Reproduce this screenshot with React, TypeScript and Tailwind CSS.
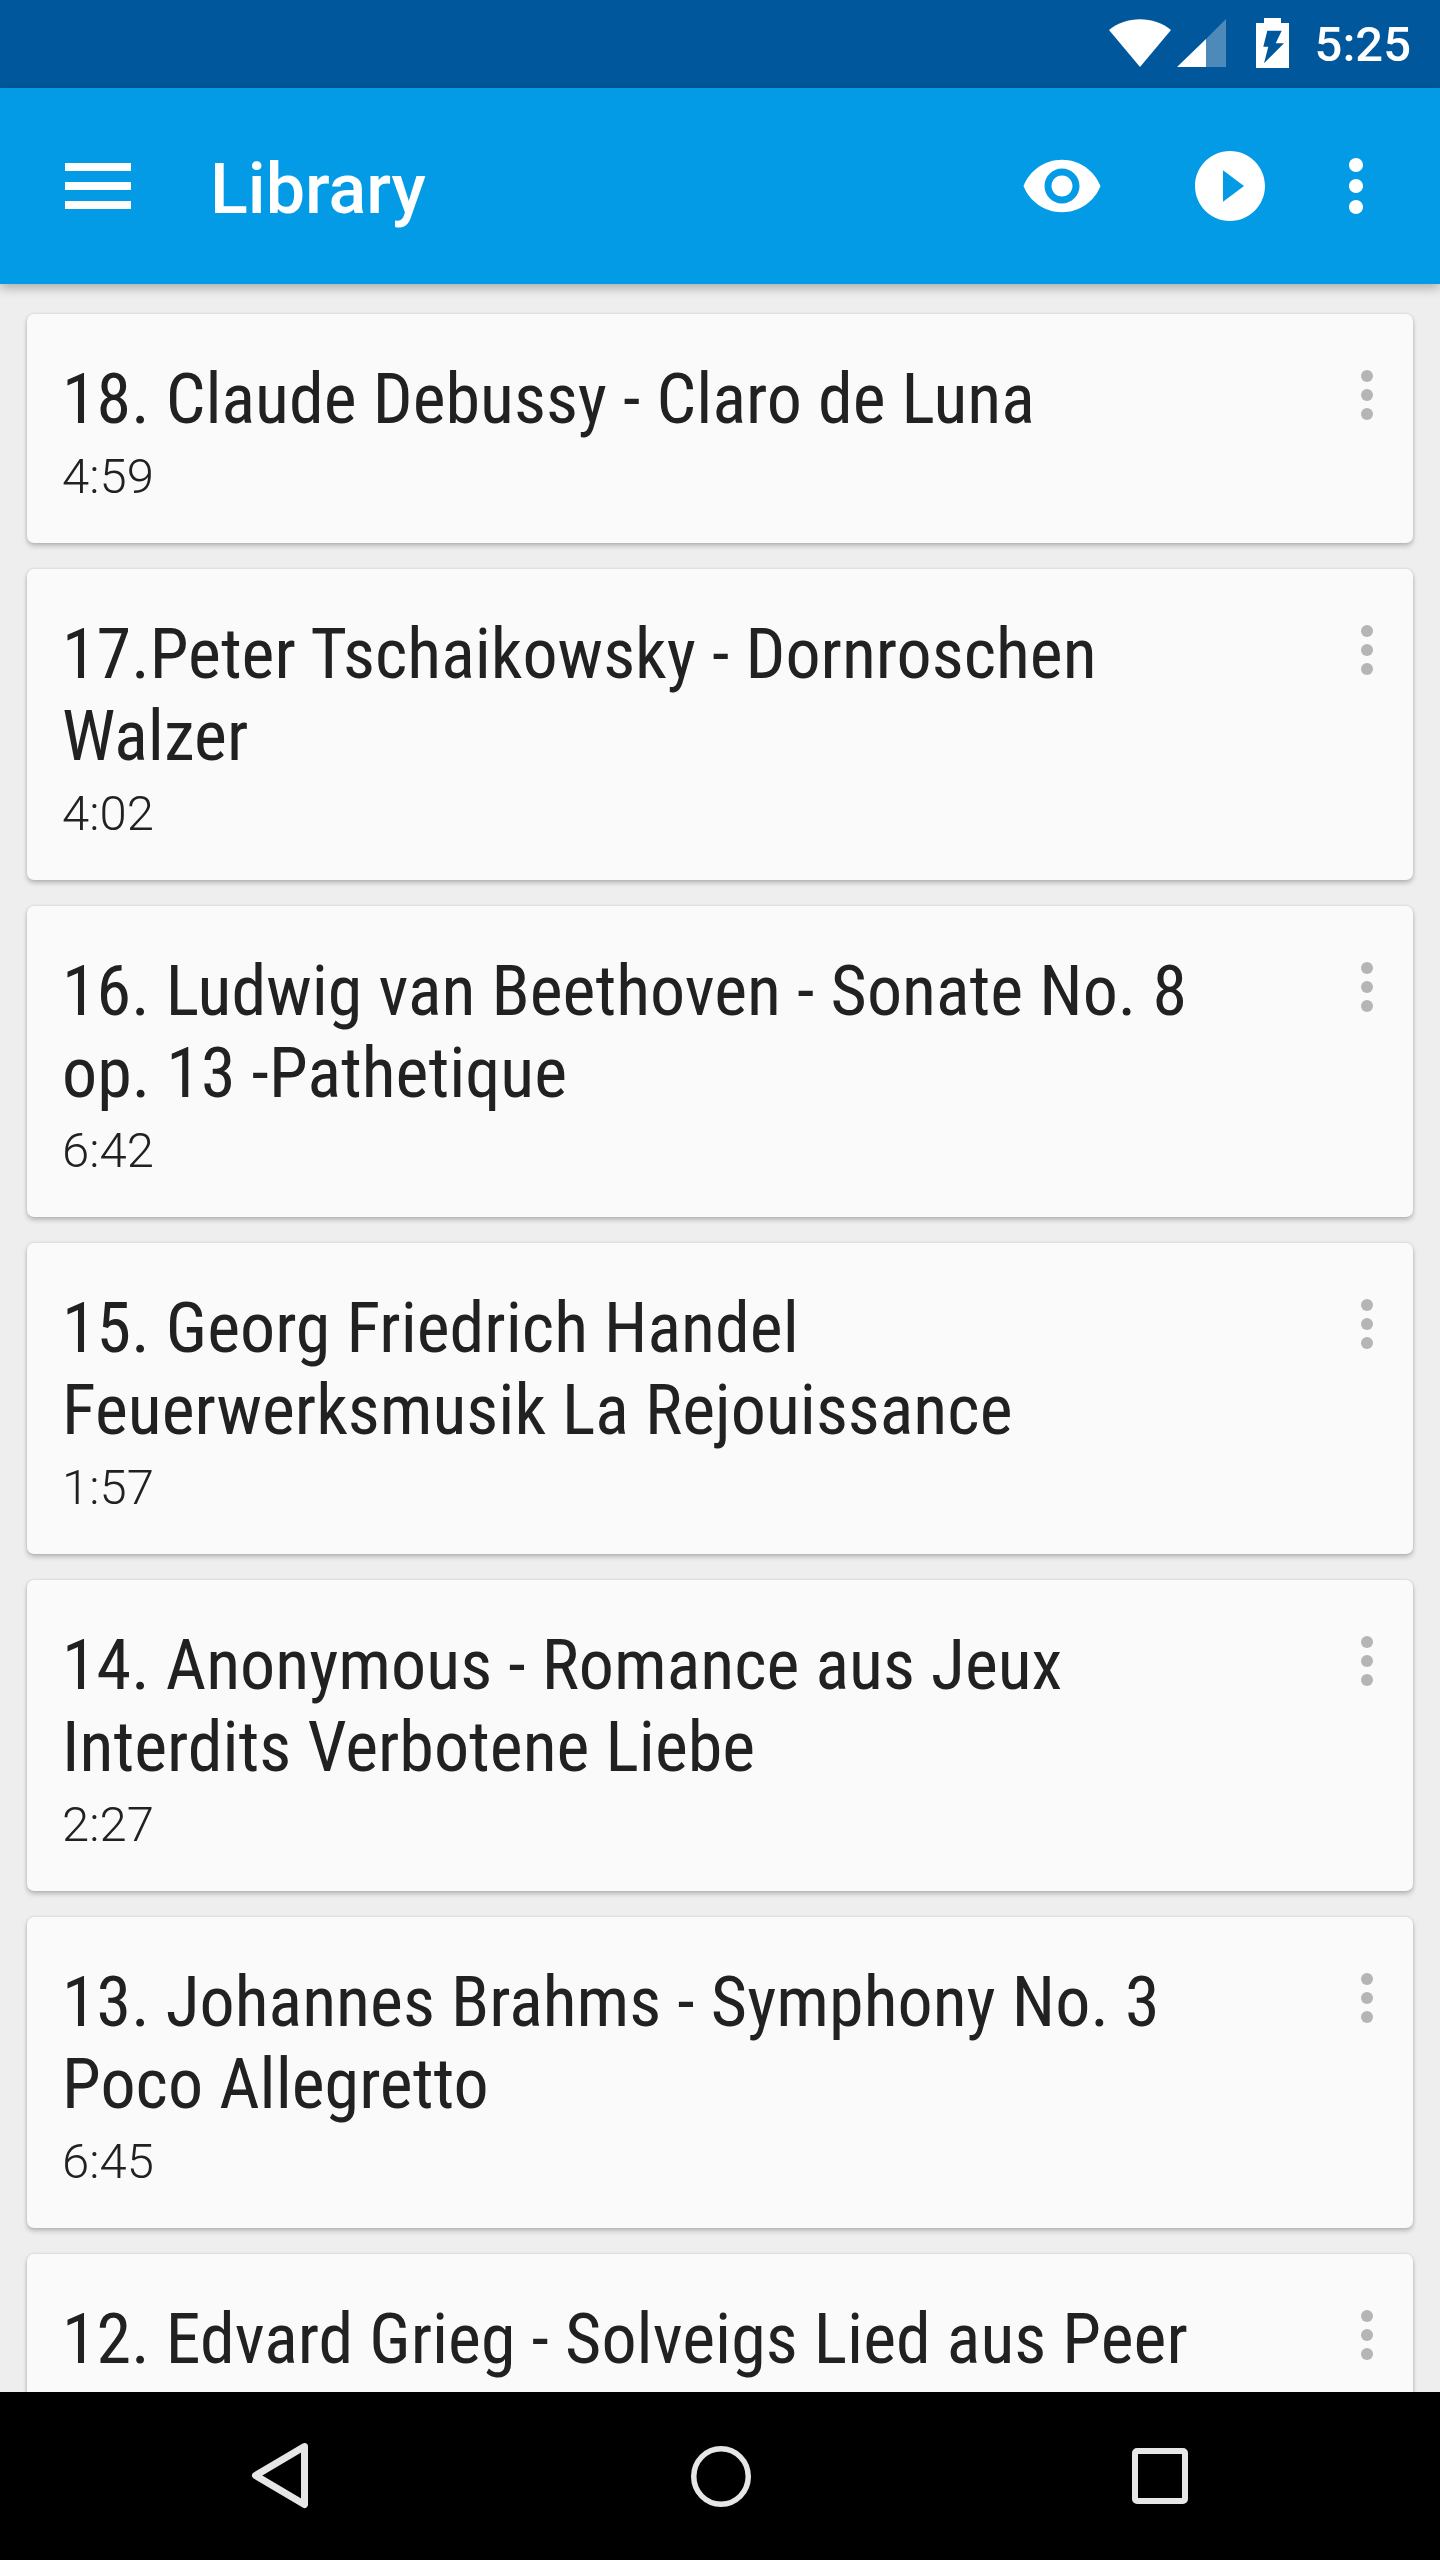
const tracks: { title: string; time?: string }[] = [
  { title: "18. Claude Debussy - Claro de Luna", time: "4:59" },
  { title: "17.Peter Tschaikowsky - Dornroschen Walzer", time: "4:02" },
  { title: "16. Ludwig van Beethoven - Sonate No. 8 op. 13 -Pathetique", time: "6:42" },
  { title: "15. Georg Friedrich Handel Feuerwerksmusik La Rejouissance", time: "1:57" },
  { title: "14. Anonymous - Romance aus Jeux Interdits Verbotene Liebe", time: "2:27" },
  { title: "13. Johannes Brahms - Symphony No. 3 Poco Allegretto", time: "6:45" },
  { title: "12. Edvard Grieg - Solveigs Lied aus Peer" },
];

function StatusBar() {
  return (
    <div className="flex h-[88px] shrink-0 items-center justify-end bg-[#01579b] pr-[29px] text-white">
      <svg width="62" height="48" viewBox="0 0 62 48" className="mb-[2px]">
        <path d="M0 11 C17 -3.5 45 -3.5 62 11 L31 48 Z" fill="#fff" />
      </svg>
      <svg width="49" height="48" viewBox="0 0 49 48" className="mb-[2px] ml-[6px]">
        <path d="M0 48 L29 20 L29 48 Z" fill="#fff" />
        <path d="M29 20 L49 0 L49 48 L29 48 Z" fill="#fff" fillOpacity="0.3" />
      </svg>
      <svg width="33" height="50" viewBox="0 0 33 50" className="mb-[2px] ml-[30px]">
        <path
          fillRule="evenodd"
          fill="#fff"
          d="M8 0 H25 V5 H33 V50 H0 V5 H8 Z M11.3 12.7 L7.3 28.7 L12.3 28.7 L8 45.3 L28 25.3 L19.7 25.3 L25.7 12.7 Z"
        />
      </svg>
      <span className="ml-[26px] text-[49px] leading-none font-medium">5:25</span>
    </div>
  );
}

function AppBar() {
  return (
    <header className="relative z-10 flex h-[196px] shrink-0 items-center bg-[#039be5] text-white shadow-[0_4px_10px_rgba(0,0,0,0.28)]">
      <div className="ml-[65px] flex w-[66px] flex-col gap-[11px]">
        <span className="h-[8px] bg-white" />
        <span className="h-[8px] bg-white" />
        <span className="h-[8px] bg-white" />
      </div>
      <h1 className="ml-[79px] flex-1 pt-[6px] text-[70px] leading-none font-medium">Library</h1>
      <svg width="84" height="84" viewBox="0 0 24 24" fill="#fff">
        <path d="M12 4.5C7 4.5 2.73 7.61 1 12c1.73 4.39 6 7.5 11 7.5s9.27-3.11 11-7.5c-1.73-4.39-6-7.5-11-7.5zM12 17c-2.76 0-5-2.24-5-5s2.24-5 5-5 5 2.24 5 5-2.24 5-5 5zm0-8c-1.66 0-3 1.34-3 3s1.34 3 3 3 3-1.34 3-3-1.34-3-3-3z" />
      </svg>
      <svg width="84" height="84" viewBox="0 0 24 24" fill="#fff" className="ml-[84px]">
        <path d="M12 2C6.48 2 2 6.48 2 12s4.48 10 10 10 10-4.48 10-10S17.52 2 12 2zm-2 14.5v-9l6 4.5-6 4.5z" />
      </svg>
      <svg width="84" height="84" viewBox="0 0 24 24" fill="#fff" className="mr-[42px] ml-[42px]">
        <path d="M12 8c1.1 0 2-.9 2-2s-.9-2-2-2-2 .9-2 2 .9 2 2 2zm0 2c-1.1 0-2 .9-2 2s.9 2 2 2 2-.9 2-2-.9-2-2-2zm0 6c-1.1 0-2 .9-2 2s.9 2 2 2 2-.9 2-2-.9-2-2-2z" />
      </svg>
    </header>
  );
}

function TrackCard({ title, time }: { title: string; time?: string }) {
  return (
    <article className="relative shrink-0 rounded-[7px] bg-[#fafafa] pt-[44px] pr-[150px] pb-[37px] pl-[35px] shadow-[0_3px_5px_rgba(0,0,0,0.22),0_0_3px_rgba(0,0,0,0.12)]">
      <h2 className="text-[70px] leading-[82px] font-normal tracking-[0.03px] text-[#212121] [font-stretch:75%]">{title}</h2>
      {time && <p className="mt-[8px] text-[49px] leading-[58px] font-light text-[#212121]">{time}</p>}
      <svg width="12" height="50" viewBox="0 0 12 50" fill="#b5b5b5" className="absolute top-[56px] right-[40px]">
        <circle cx="6" cy="6" r="6" />
        <circle cx="6" cy="25" r="6" />
        <circle cx="6" cy="44" r="6" />
      </svg>
    </article>
  );
}

function NavBar() {
  return (
    <nav className="relative z-10 flex h-[168px] shrink-0 items-center justify-between bg-black pr-[252px] pl-[247px]">
      <svg width="64" height="70" viewBox="0 0 64 70" fill="none" stroke="#e6e6e6" strokeWidth="7" strokeLinejoin="round">
        <path d="M57.5 5.5 L8.5 34.5 L57.5 63.5 Z" />
      </svg>
      <svg width="60" height="61" viewBox="0 0 60 61" fill="none" stroke="#e6e6e6" strokeWidth="5.5" className="-translate-x-[1px]">
        <ellipse cx="30" cy="30.5" rx="27.25" ry="27.75" />
      </svg>
      <svg width="56" height="56" viewBox="0 0 56 56" fill="none" stroke="#e6e6e6" strokeWidth="6">
        <rect x="3" y="3" width="50" height="50" rx="2" />
      </svg>
    </nav>
  );
}

export default function App() {
  return (
    <div className="flex h-[2560px] w-[1440px] flex-col overflow-hidden bg-[#eeeeee] font-['Roboto',sans-serif]">
      <StatusBar />
      <AppBar />
      <main className="flex min-h-0 flex-1 flex-col gap-[26px] overflow-hidden px-[27px] pt-[30px]">
        {tracks.map((t) => (
          <TrackCard key={t.title} title={t.title} time={t.time} />
        ))}
      </main>
      <NavBar />
    </div>
  );
}
